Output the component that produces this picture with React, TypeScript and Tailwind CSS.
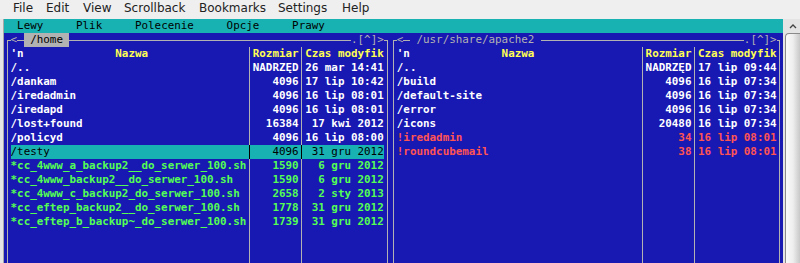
import type { FC } from "react";

type Kind = "dir" | "exe" | "link";

interface Entry {
  name: string;
  size: string;
  time: string;
  kind: Kind;
  selected?: boolean;
}

const leftEntries: Entry[] = [
  { name: "/..", size: "NADRZĘD", time: "26 mar 14:41", kind: "dir" },
  { name: "/dankam", size: "4096", time: "17 lip 10:42", kind: "dir" },
  { name: "/iredadmin", size: "4096", time: "16 lip 08:01", kind: "dir" },
  { name: "/iredapd", size: "4096", time: "16 lip 08:01", kind: "dir" },
  { name: "/lost+found", size: "16384", time: " 17 kwi 2012", kind: "dir" },
  { name: "/policyd", size: "4096", time: "16 lip 08:00", kind: "dir" },
  { name: "/testy", size: "4096", time: " 31 gru 2012", kind: "dir", selected: true },
  { name: "*cc_4www_a_backup2__do_serwer_100.sh", size: "1590", time: "  6 gru 2012", kind: "exe" },
  { name: "*cc_4www_backup2__do_serwer_100.sh", size: "1590", time: "  6 gru 2012", kind: "exe" },
  { name: "*cc_4www_c_backup2_do_serwer_100.sh", size: "2658", time: "  2 sty 2013", kind: "exe" },
  { name: "*cc_eftep_backup2__do_serwer_100.sh", size: "1778", time: " 31 gru 2012", kind: "exe" },
  { name: "*cc_eftep_b_backup~_do_serwer_100.sh", size: "1739", time: " 31 gru 2012", kind: "exe" },
];

const rightEntries: Entry[] = [
  { name: "/..", size: "NADRZĘD", time: "17 lip 09:44", kind: "dir" },
  { name: "/build", size: "4096", time: "16 lip 07:34", kind: "dir" },
  { name: "/default-site", size: "4096", time: "16 lip 07:34", kind: "dir" },
  { name: "/error", size: "4096", time: "16 lip 07:34", kind: "dir" },
  { name: "/icons", size: "20480", time: "16 lip 07:34", kind: "dir" },
  { name: "!iredadmin", size: "34", time: "16 lip 08:01", kind: "link" },
  { name: "!roundcubemail", size: "38", time: "16 lip 08:01", kind: "link" },
];

const kindText: Record<Kind, string> = {
  dir: "text-white font-bold",
  exe: "text-[#54ff54] font-bold",
  link: "text-[#ff5454] font-bold",
};

const menuItems = [
  { label: "File", w: "w-[33px]" },
  { label: "Edit", w: "w-[37px]" },
  { label: "View", w: "w-[41px]" },
  { label: "Scrollback", w: "w-[75px]" },
  { label: "Bookmarks", w: "w-[79px]" },
  { label: "Settings", w: "w-[64px]" },
  { label: "Help", w: "w-[40px]" },
];

const Sep: FC<{ dark?: boolean }> = ({ dark }) => (
  <div className="w-[1ch] shrink-0 flex justify-center">
    <div className={dark ? "w-px bg-black" : "w-px bg-[#b2b2b2]"} />
  </div>
);

interface PanelProps {
  path: string;
  active: boolean;
  wide: boolean;
  entries: Entry[];
}

const Panel: FC<PanelProps> = ({ path, active, wide, entries }) => {
  const nameW = wide ? "w-[37ch]" : "w-[36ch]";

  return (
    <div className={`${wide ? "w-[60ch]" : "w-[59ch]"} shrink-0 px-[calc(0.5ch_-_0.5px)] pt-[7px] flex flex-col overflow-hidden`}>
      {/* frame: grey 1px edge around the blue inner box */}
      <div className="flex-1 flex flex-col bg-[#b2b2b2] pt-px px-px">
        <div className="flex-1 flex flex-col bg-[#1818b2] px-[calc(0.5ch_-_0.5px)]">
          {/* title line sits on top of the frame */}
          <div className="mt-[-8px] h-[14px] shrink-0 flex text-[#b2b2b2] whitespace-pre">
            <span className="bg-[#1818b2]">&lt;</span>
            <span className="w-[1ch]" />
            <span className={active ? "bg-[#b2b2b2] text-black" : "bg-[#1818b2] text-[#b2b2b2]"}>
              {` ${path} `}
            </span>
            <span className="flex-1" />
            <span className="bg-[#1818b2]">.[^]&gt;</span>
          </div>

          <div className="h-[14px] shrink-0 flex text-[#ffff54] font-bold whitespace-pre">
            <div className={`${nameW} shrink-0`}>
              <span className="text-white">'n</span>
              {"              Nazwa"}
            </div>
            <Sep />
            <div className="w-[7ch] shrink-0">Rozmiar</div>
            <Sep />
            <div className="w-[12ch] shrink-0">Czas modyfik</div>
          </div>

          {entries.map((e) => (
            <div
              key={e.name}
              className={`h-[14px] shrink-0 flex whitespace-pre ${
                e.selected ? "bg-[#18b2b2] text-black font-normal" : kindText[e.kind]
              }`}
            >
              <div className={`${nameW} shrink-0 overflow-hidden`}>{e.name}</div>
              <Sep dark={e.selected} />
              <div className="w-[7ch] shrink-0 text-right">{e.size}</div>
              <Sep dark={e.selected} />
              <div className="w-[12ch] shrink-0">{e.time}</div>
            </div>
          ))}

          <div className="flex-1 flex">
            <div className={`${nameW} shrink-0`} />
            <Sep />
            <div className="w-[7ch] shrink-0" />
            <Sep />
            <div className="w-[12ch] shrink-0" />
          </div>
        </div>
      </div>
    </div>
  );
};

export default function App() {
  return (
    <div className="w-[800px] h-[263px] overflow-hidden bg-[#efefef] flex flex-col">
      <div className="h-[19px] shrink-0 flex pl-[13px] text-[12px] leading-[17px] text-[#222] font-['DejaVu_Sans',sans-serif]">
        {menuItems.map((m) => (
          <span key={m.label} className={m.w}>
            {m.label}
          </span>
        ))}
      </div>

      <div className="flex-1 min-h-0 flex">
        <div className="w-[4px] shrink-0 bg-[#e6e6e6] border-r border-[#a8a8a8]" />

        <div className="w-[119ch] shrink-0 flex flex-col bg-[#1818b2] font-['DejaVu_Sans_Mono',monospace] text-[10.88px] leading-[14px]">
          <div className="h-[14px] shrink-0 bg-[#18b2b2] text-black whitespace-pre">
            {"  Lewy     Plik     Polecenie     Opcje     Prawy"}
          </div>
          <div className="flex-1 min-h-0 flex">
            <Panel path="/home" active wide={false} entries={leftEntries} />
            <Panel path="/usr/share/apache2" active={false} wide entries={rightEntries} />
          </div>
        </div>

        <div className="flex-1 flex flex-col bg-[#e4e4e4] pl-[2px]">
          <div className="h-[14px] shrink-0 flex items-center justify-center">
            <svg width="8" height="6" viewBox="0 0 8 6">
              <path d="M1 5 L4 2 L7 5" fill="none" stroke="#444" strokeWidth="1.3" />
            </svg>
          </div>
          <div className="flex-1 rounded-tl-[4px] border-l border-t border-[#8a8a8a] bg-gradient-to-r from-[#fafafa] via-[#eeeeee] to-[#c8c8c8]" />
        </div>
      </div>
    </div>
  );
}
